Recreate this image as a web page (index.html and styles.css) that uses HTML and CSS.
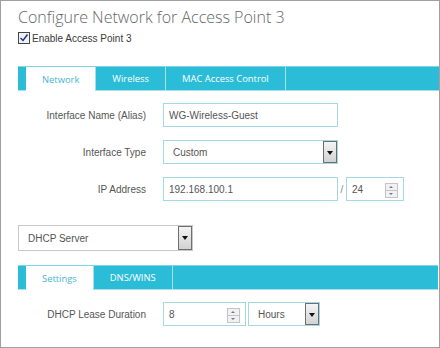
FILE: index.html
```html
<!DOCTYPE html>
<html lang="en">
<head>
    <meta charset="UTF-8">
    <title>Configure Network for Access Point 3</title>
    <link rel="stylesheet" href="styles.css">
</head>
<body>
    <div class="window">
        <h1 class="title">Configure Network for Access Point 3</h1>
        <label class="enable">
            <span class="check">
                <svg width="10" height="10" viewBox="0 0 10 10"><path d="M1.5 5 L4 7.5 L8.5 1.5" fill="none" stroke="#1c2f86" stroke-width="1.4"/></svg>
            </span>
            Enable Access Point 3
        </label>

        <div class="tabs">
            <span class="tab active">Network</span>
            <span class="tab">Wireless</span>
            <span class="tab">MAC Access Control</span>
        </div>

        <div class="form">
            <div class="row">
                <span class="label">Interface Name (Alias)</span>
                <span class="field w-name">WG-Wireless-Guest</span>
            </div>
            <div class="row">
                <span class="label">Interface Type</span>
                <span class="field select w-name">Custom<span class="arrow"></span></span>
            </div>
            <div class="row">
                <span class="label">IP Address</span>
                <span class="field w-name">192.168.100.1</span>
                <span class="slash">/</span>
                <span class="field spin w-prefix">24<span class="spinner"><i class="up"></i><i class="down"></i></span></span>
            </div>
        </div>

        <span class="field select w-mode">DHCP Server<span class="arrow"></span></span>

        <div class="tabs sub">
            <span class="tab active">Settings</span>
            <span class="tab">DNS/WINS</span>
        </div>

        <div class="form">
            <div class="row">
                <span class="label">DHCP Lease Duration</span>
                <span class="field spin w-lease">8<span class="spinner"><i class="up"></i><i class="down"></i></span></span>
                <span class="field select w-unit">Hours<span class="arrow"></span></span>
            </div>
        </div>
    </div>
</body>
</html>
```

FILE: styles.css
```css
body {
    margin: 0;
    font-family: 'Liberation Sans', Arial, sans-serif;
}
.window {
    width: 440px;
    height: 348px;
    box-sizing: border-box;
    border: 1px solid #a0a0a0;
    padding-left: 17px;
    overflow: hidden;
    background: #fff;
}
.title {
    margin: 6px 0 0;
    font-family: 'Open Sans', sans-serif;
    font-weight: 300;
    font-size: 16px;
    line-height: 20px;
    color: #666;
}
.enable {
    display: flex;
    align-items: center;
    margin-top: 4px;
    height: 14px;
    font-size: 10px;
    color: #3a3a3a;
}
.check {
    width: 10px;
    height: 10px;
    border: 1px solid #444;
    background: #eef1f6;
    margin-right: 2px;
    display: flex;
}

/* tab bars */
.tabs {
    display: flex;
    margin-top: 21px;
    padding-left: 8px;
    height: 23px;
    background: #2bbcd7;
    border-top: 1px solid #7fd4e5;
    border-bottom: 1px solid #a7e0eb;
}
.tabs.sub {
    margin-top: 14px;
    margin-right: 1px;
}
.tab {
    display: flex;
    align-items: center;
    padding: 0 16px;
    border-right: 1px solid #a5dfea;
    font-family: 'Open Sans', sans-serif;
    font-size: 9.4px;
    color: #fff;
}
.tab.active {
    background: #fff;
    color: #45b7cf;
    height: 24px;
}

/* form rows */
.form {
    padding-top: 12px;
}
.row {
    display: flex;
    align-items: center;
    margin-bottom: 13px;
}
.label {
    width: 128px;
    margin-right: 17px;
    text-align: right;
    font-size: 10px;
    color: #555;
}
.field {
    position: relative;
    display: flex;
    align-items: center;
    box-sizing: border-box;
    height: 24px;
    padding-left: 5px;
    border: 1px solid #a3d9e5;
    font-size: 10px;
    color: #555;
    background: #fff;
}
.field.select {
    padding-left: 9px;
}
.w-name { width: 175px; }
.w-prefix { width: 58px; }
.w-lease { width: 83px; }
.w-unit { width: 72px; margin-left: 2px; }
.w-mode { width: 175px; height: 26px; margin-top: 24px; border-color: #c9c9c9; padding-left: 6px; }
.slash {
    width: 8px;
    text-align: center;
    font-size: 10px;
    color: #888;
}

/* select arrow button */
.arrow {
    position: absolute;
    right: 0;
    top: 0;
    bottom: 0;
    width: 12px;
    border: 1px solid #6e6e6e;
    background: linear-gradient(#f4f4f4, #d2d2d2);
}
.arrow::after {
    content: '';
    position: absolute;
    left: 3px;
    top: 9px;
    border-left: 3px solid transparent;
    border-right: 3px solid transparent;
    border-top: 4px solid #111;
}

/* number spinner */
.spinner {
    position: absolute;
    right: 5px;
    top: 5px;
    width: 11px;
    height: 13px;
    display: flex;
    flex-direction: column;
    border: 1px solid #c4c4c4;
    background: #f1f1f1;
}
.spinner i {
    flex: 1;
    position: relative;
}
.spinner .up {
    border-bottom: 1px solid #c4c4c4;
}
.spinner i::after {
    content: '';
    position: absolute;
    left: 3px;
    top: 2px;
    border-left: 2px solid transparent;
    border-right: 2px solid transparent;
}
.spinner .up::after {
    border-bottom: 2px solid #6a7a99;
}
.spinner .down::after {
    border-top: 2px solid #6a7a99;
}
```
